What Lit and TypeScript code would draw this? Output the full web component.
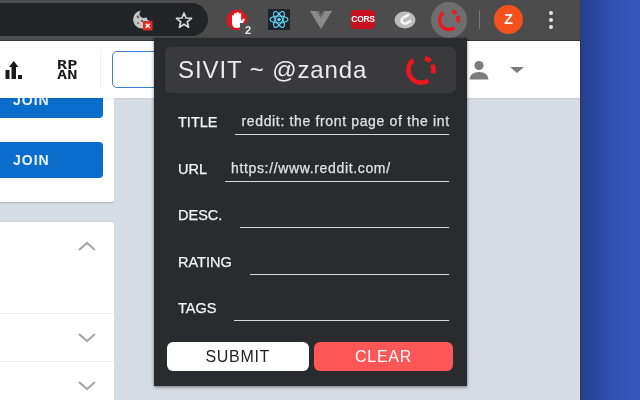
import { LitElement, html, css } from "lit";
import { customElement } from "lit/decorators.js";

const ring = (size: number) => html`<svg width=${size} height=${size} viewBox="0 0 32 32"><g fill="none" stroke="#ee1620" stroke-width="4.6" transform="rotate(55 16 16)">
  <circle cx="16" cy="16" r="12.6" pathLength="360" stroke-dasharray="177 56 29 18 40 40"></circle></g></svg>`;

const chevron = (up: boolean) => html`<svg class="chev" width="20" height="12" viewBox="0 0 20 12"><path d=${up ? "M2 10 L10 3 L18 10" : "M2 2 L10 9 L18 2"} fill="none" stroke="#a6a8aa" stroke-width="2.2"></path></svg>`;

@customElement("app-root")
export class AppRoot extends LitElement {
  static styles = css`
    :host { display: block; width: 640px; height: 400px; overflow: hidden; font-family: "Liberation Sans", Arial, sans-serif; }
    .screen { position: relative; display: flex; width: 640px; height: 400px; filter: blur(0.35px); }
    .window { width: 580px; display: flex; flex-direction: column; background: #d6dce3; border-right: 1px solid #3a3a3a; }
    .desktop { flex: 1; background: linear-gradient(90deg, #243f91 0%, #3253b5 60%, #3557bb 100%); }

    .toolbar { height: 40px; flex: none; display: flex; align-items: center; background: #4c4c4c; border-bottom: 1px solid #35363a; }
    .omni { width: 208px; height: 33px; margin-top: -1px; flex: none; display: flex; align-items: center; justify-content: flex-end; gap: 21px; padding-right: 15px; box-sizing: border-box; background: #232427; border-radius: 0 17px 17px 0; }
    .exts { display: flex; align-items: center; padding-left: 8px; margin-top: -1px; }
    .slot { width: 42px; height: 36px; display: flex; align-items: center; justify-content: center; position: relative; }
    .slot.active { width: 36px; margin-left: 5px; border-radius: 50%; background: #6e6e6e; }
    .badge { position: absolute; left: 24px; bottom: 1px; width: 16px; height: 14px; background: #4f4f4f; color: #e8e8e8; font-size: 11px; font-weight: 700; text-align: center; line-height: 14px; }
    .cors { width: 24px; height: 19px; border-radius: 4px; background: #c8101f; color: #fff; font-size: 8.5px; font-weight: 700; letter-spacing: -0.3px; text-align: center; line-height: 19px; }
    .react { width: 22px; height: 21px; background: #20232a; display: flex; align-items: center; justify-content: center; }
    .sep { width: 1px; height: 19px; background: #777; margin-left: 12px; }
    .avatar { width: 29px; height: 29px; margin-left: 14px; border-radius: 50%; background: #f4511e; color: #fff; font-size: 14px; font-weight: 700; text-align: center; line-height: 29px; }
    .dots { margin-left: 26px; display: flex; flex-direction: column; gap: 3px; }
    .dots i { width: 4px; height: 4px; border-radius: 50%; background: #e4e4e4; display: block; }

    .header { height: 57px; flex: none; display: flex; align-items: center; background: #fff; box-shadow: 0 1px 2px rgba(0,0,0,.08); position: relative; z-index: 1; }
    .rank { margin-left: 4px; }
    .logo { margin-left: 31px; width: 24px; font: 700 12.5px/9.5px "DejaVu Sans Mono", monospace; color: #1a1a1b; letter-spacing: 0; transform: scaleX(1.35); transform-origin: left center; }
    .vline { width: 1px; height: 38px; margin-left: 19px; background: #edeff1; }
    .search { width: 200px; height: 37px; box-sizing: border-box; margin-left: 11px; border: 1px solid #3a7fd5; border-radius: 5px; }
    .spacer { flex: 1; }
    .person { margin-right: 21px; }
    .caret { margin-right: 56px; width: 0; height: 0; border-left: 7px solid transparent; border-right: 7px solid transparent; border-top: 6px solid #7c7c7c; }

    .content { flex: 1; width: 114px; display: flex; flex-direction: column; overflow: hidden; }
    .joins { height: 104px; flex: none; background: #fff; overflow: hidden; display: flex; flex-direction: column; gap: 24px; border-radius: 0 0 3px 0; box-shadow: 0 1px 2px rgba(0,0,0,.2); }
    .join { flex: none; width: 103px; height: 36px; box-sizing: border-box; background: #0a6ccb; border-radius: 0 4px 4px 0; color: #e9f2fb; font-size: 14px; font-weight: 700; letter-spacing: 1px; padding-left: 13px; line-height: 36px; }
    .join:first-child { margin-top: -16px; }
    .card { margin-top: 20px; flex: 1; background: #fff; border-radius: 0 3px 0 0; display: flex; flex-direction: column; box-shadow: 1px 0 2px rgba(0,0,0,.15); }
    .row { display: flex; justify-content: flex-end; box-sizing: border-box; padding-right: 17px; border-bottom: 1px solid #edeff1; }
    .row.one { height: 92px; padding-top: 18px; }
    .row.two { height: 48px; padding-top: 18px; }
    .row.three { border: 0; padding-top: 18px; }

    .popup { position: absolute; z-index: 2; left: 154px; top: 38px; width: 313px; height: 348px; box-sizing: border-box; padding: 9px 11px 0; background: #2a2b2e; box-shadow: 0 1px 3px rgba(0,0,0,.5); color: #f2f2f2; display: flex; flex-direction: column; }
    .title { height: 46px; flex: none; box-sizing: border-box; display: flex; align-items: center; justify-content: space-between; padding: 0 19px 0 13px; background: #3a3a3c; border-radius: 6px; font-size: 24px; letter-spacing: .9px; color: #ececec; }
    .fields { margin: 6px 7px 0 13px; display: flex; flex-direction: column; }
    .field { height: 46.5px; display: flex; align-items: center; gap: 18px; font-size: 14.5px; color: #f4f4f4; -webkit-text-stroke: .25px #f4f4f4; }
    .value { flex: 1; min-width: 0; height: 24px; box-sizing: border-box; border-bottom: 1.5px solid #d8d8d8; font-size: 14px; line-height: 20px; padding: 0 7px 0 6px; white-space: nowrap; overflow: hidden; letter-spacing: .65px; color: #e2e2e2; -webkit-text-stroke: .25px #e2e2e2; position: relative; top: 1px; }
    .actions { display: flex; gap: 5.5px; margin: 10px 3px 0 2px; }
    .btn { height: 29px; border-radius: 6px; text-align: center; line-height: 29px; font-size: 16px; letter-spacing: .7px; }
    .submit { width: 141.5px; flex: none; background: #fff; color: #222; }
    .clear { flex: 1; background: #fd5656; color: #fff; }
  `;

  render() {
    const fields = [
      ["TITLE", "reddit: the front page of the internet"],
      ["URL", "https://www.reddit.com/"],
      ["DESC.", ""],
      ["RATING", ""],
      ["TAGS", ""],
    ];
    return html`<div class="screen">
      <div class="window">
        <div class="toolbar">
          <div class="omni">
            <svg width="22" height="22" viewBox="0 0 22 22">
              <path d="M9 1.5 a9 9 0 1 0 10 10.5 a4 4 0 0 1-4.5-4 a4 4 0 0 1-5.500-6.500z" fill="#c6c6c6"></path>
              <circle cx="6" cy="8" r="1.4" fill="#666"></circle><circle cx="10" cy="12" r="1.2" fill="#666"></circle><circle cx="6" cy="14" r="1" fill="#666"></circle>
              <rect x="11" y="12" width="9.500" height="9.500" fill="#d9302a"></rect>
              <path d="M13.7 14.7 l4 4 m0-4 l-4 4" stroke="#fff" stroke-width="1.3"></path>
            </svg>
            <svg width="18" height="18" viewBox="0 0 18 18"><path d="M9 2 L11 7 L16.5 7.4 L12.3 10.9 L13.6 16.2 L9 13.3 L4.4 16.2 L5.7 10.9 L1.5 7.4 L7 7z" fill="none" stroke="#d8d8d8" stroke-width="1.7" stroke-linejoin="round"></path></svg>
          </div>
          <div class="exts">
            <div class="slot">
              <svg width="22" height="22" viewBox="0 0 22 22"><path d="M7 1 H15 L21 7 V15 L15 21 H7 L1 15 V7z" fill="#e2141c"></path><path d="M6 7 Q6 6 7 6 Q8 6 8 7 V5 Q8 4 9.200 4 Q10.500 4 10.500 5 V4 Q10.500 3 11.700 3 Q13 3 13 4 V5 Q13 4.300 14 4.300 Q15.200 4.300 15.200 5.300 V12 L17 9.800 Q18 9 19 10 L16 16 Q14.500 19 11 19 Q6 19 6 14z" fill="#fff"></path></svg>
              <span class="badge">2</span>
            </div>
            <div class="slot"><div class="react"><svg width="20" height="19" viewBox="0 0 20 19"><g fill="none" stroke="#61dafb" stroke-width="1.1"><ellipse cx="10" cy="9.5" rx="9" ry="3.5"></ellipse><ellipse cx="10" cy="9.5" rx="9" ry="3.5" transform="rotate(60 10 9.5)"></ellipse><ellipse cx="10" cy="9.5" rx="9" ry="3.5" transform="rotate(120 10 9.5)"></ellipse></g><circle cx="10" cy="9.5" r="1.7" fill="#61dafb"></circle></svg></div></div>
            <div class="slot"><svg width="22" height="18" viewBox="0 0 22 18"><path d="M0 0 H7 L11 7 L15 0 H22 L11 18z" fill="#8b8b8b"></path><path d="M7 0 H9 L11 4 L13 0 H15 L11 7z" fill="#6f6f6f"></path></svg></div>
            <div class="slot"><div class="cors">CORS</div></div>
            <div class="slot"><svg width="22" height="20" viewBox="0 0 22 20"><ellipse cx="11" cy="10" rx="10.5" ry="8.5" fill="#bcbcbc"></ellipse><path d="M15 4.5 L9.5 7.5 Q6.5 9.5 8 12 Q10 14.5 13 13 L17 10.5" fill="none" stroke="#f4f4f4" stroke-width="2.6"></path></svg></div>
            <div class="slot active">${ring(24)}</div>
            <div class="sep"></div>
            <div class="avatar">Z</div>
            <div class="dots"><i></i><i></i><i></i></div>
          </div>
        </div>
        <div class="header">
          <svg class="rank" width="22" height="20" viewBox="0 0 22 20"><path d="M1.5 10 h4 v9 h-4z M7.5 7 h4.5 v12 h-4.5z M14 15 h4 v4 h-4z" fill="#1a1a1b"></path><path d="M9.7 1 L14.5 7 H5 z" fill="#1a1a1b"></path></svg>
          <div class="logo">RP<br />AN</div>
          <div class="vline"></div>
          <div class="search"></div>
          <div class="spacer"></div>
          <svg class="person" width="20" height="20" viewBox="0 0 20 20"><circle cx="10" cy="5.5" r="4.6" fill="#7c7c7c"></circle><path d="M0.5 19.5 Q1 12 10 12 Q19 12 19.5 19.5z" fill="#7c7c7c"></path></svg>
          <div class="caret"></div>
        </div>
        <div class="content">
          <div class="joins"><div class="join">JOIN</div><div class="join">JOIN</div></div>
          <div class="card">
            <div class="row one">${chevron(true)}</div>
            <div class="row two">${chevron(false)}</div>
            <div class="row three">${chevron(false)}</div>
          </div>
        </div>
      </div>
      <div class="desktop"></div>
      <div class="popup">
        <div class="title"><span>SIVIT ~ @zanda</span>${ring(32)}</div>
        <div class="fields">
          ${fields.map(([l, v]) => html`<div class="field"><span>${l}</span><div class="value">${v}</div></div>`)}
        </div>
        <div class="actions"><div class="btn submit">SUBMIT</div><div class="btn clear">CLEAR</div></div>
      </div>
    </div>`;
  }
}
